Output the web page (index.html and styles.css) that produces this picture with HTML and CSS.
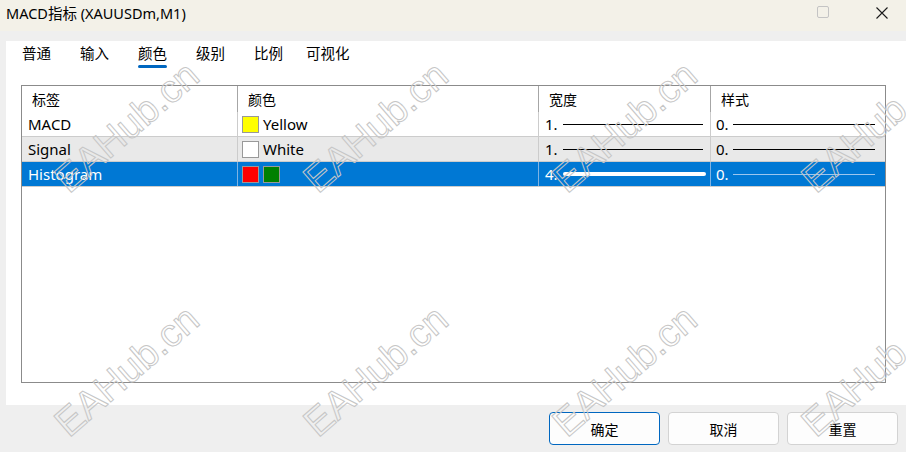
FILE: index.html
```html
<!DOCTYPE html>
<html lang="zh-CN">
<head>
    <meta charset="UTF-8">
    <title>MACD指标 (XAUUSDm,M1)</title>
    <link rel="stylesheet" href="styles.css">
</head>
<body>
    <div class="window">
        <!-- 标题栏 -->
        <div class="titlebar">
            <span class="title">MACD指标 (XAUUSDm,M1)</span>
            <span class="btn-max"></span>
            <svg class="btn-close" width="12" height="12" viewBox="0 0 12 12">
                <path d="M0.5 0.5 L11.5 11.5 M11.5 0.5 L0.5 11.5" stroke="#1a1a1a" stroke-width="1.1" fill="none"/>
            </svg>
        </div>

        <div class="panel">
            <!-- 选项卡 -->
            <ul class="tabs">
                <li>普通</li>
                <li>输入</li>
                <li class="active">颜色</li>
                <li>级别</li>
                <li class="narrow">比例</li>
                <li>可视化</li>
            </ul>

            <!-- 线条列表 -->
            <div class="list">
                <div class="row head">
                    <div class="cell c1">标签</div>
                    <div class="cell c2">颜色</div>
                    <div class="cell c3">宽度</div>
                    <div class="cell c4">样式</div>
                </div>
                <div class="row">
                    <div class="cell c1">MACD</div>
                    <div class="cell c2"><span class="swatch" style="background:#ffff00"></span>Yellow</div>
                    <div class="cell c3">1.<span class="line w1"></span></div>
                    <div class="cell c4">0.<span class="line s0"></span></div>
                </div>
                <div class="row alt">
                    <div class="cell c1">Signal</div>
                    <div class="cell c2"><span class="swatch" style="background:#ffffff"></span>White</div>
                    <div class="cell c3">1.<span class="line w1"></span></div>
                    <div class="cell c4">0.<span class="line s0"></span></div>
                </div>
                <div class="row selected">
                    <div class="cell c1">Histogram</div>
                    <div class="cell c2"><span class="swatch" style="background:#ff0000"></span><span class="swatch" style="background:#008000"></span></div>
                    <div class="cell c3">4.<span class="line w4"></span></div>
                    <div class="cell c4">0.<span class="line s0"></span></div>
                </div>
            </div>
        </div>

        <!-- 底部按钮 -->
        <div class="footer">
            <button class="btn primary">确定</button>
            <button class="btn">取消</button>
            <button class="btn">重置</button>
        </div>

        <!-- 水印 -->
        <div class="watermark">
            <span>EAHub.cn</span><span>EAHub.cn</span><span>EAHub.cn</span><span>EAHub.cn</span>
            <span>EAHub.cn</span><span>EAHub.cn</span><span>EAHub.cn</span><span>EAHub.cn</span>
        </div>
    </div>
</body>
</html>
```

FILE: styles.css
```css
*{
    margin: 0;
    padding: 0;
    box-sizing: border-box;
}
body{
    background-color: #efefef;
    font-family: "Segoe UI", "Noto Sans", "Noto Sans CJK SC", sans-serif;
    color: #000;
}
.window{
    width: 906px;
    height: 452px;
    position: relative;
    overflow: hidden;
}

/* 标题栏 */
.titlebar{
    height: 31px;
    background-color: #f3f1e8;
    display: flex;
    align-items: center;
    padding-left: 6px;
}
.title{
    font-size: 14.5px;
    flex: 1;
    margin-top: -7px;
}
.btn-max{
    width: 12px;
    height: 12px;
    border: 1px solid #c4c4c4;
    border-radius: 2px;
    margin-right: 47px;
    margin-top: -7px;
}
.btn-close{
    margin-right: 18px;
    margin-top: -6px;
}

/* 白色内容区 */
.panel{
    margin: 10px 0 0 6px;
    height: 364px;
    background-color: #fff;
    padding: 0 20px 0 15px;
}

.tabs{
    list-style: none;
    display: flex;
    padding: 1px 0 0 1px;
    height: 44px;
}
.tabs li{
    font-size: 14.5px;
    font-family: "Noto Sans CJK SC", sans-serif;
    margin-right: 29px;
    height: 24px;
    position: relative;
}
.tabs li.narrow{
    margin-right: 23px;
}
.tabs li.active::after{
    content: "";
    position: absolute;
    left: 0;
    right: 0;
    bottom: -2px;
    height: 3px;
    border-radius: 2px;
    background-color: #0067c0;
}

/* 列表 */
.list{
    border: 1px solid #8b8b8b;
    height: 298px;
    font-size: 15px;
}
.row{
    display: flex;
    height: 25px;
    border-bottom: 1px solid #cccccc;
}
.row.head{
    height: 26px;
    border-bottom: none;
}
.row.alt{
    background-color: #e9e9e9;
}
.row.selected{
    background-color: #0078d4;
    color: #fff;
}
.cell{
    display: flex;
    align-items: center;
    padding-left: 6px;
    border-right: 1px solid #cccccc;
    white-space: nowrap;
}
.head .cell{
    padding-left: 10px;
    border-right-color: #a6a6a6;
    font-family: "Noto Sans CJK SC", sans-serif;
    font-size: 14px;
    align-items: flex-end;
    padding-bottom: 3px;
}
.selected .cell{
    border-right-color: #7fb3e3;
}
.cell:last-child{
    border-right: none;
}
.c1{ width: 216px; }
.c2{ width: 301px; padding-left: 4px; }
.c3{ width: 172px; }
.c4{ flex: 1; padding-left: 5px; }

.swatch{
    width: 17px;
    height: 17px;
    border: 1px solid #999;
    margin-right: 4px;
}

/* 线宽、线型示意 */
.line{
    display: block;
    height: 1px;
    background-color: #000;
    margin-left: 5px;
}
.w1{ width: 140px; }
.w4{
    width: 143px;
    height: 4px;
    border-radius: 2px;
    background-color: #fff;
}
.s0{ width: 142px; margin-left: 4px; }
.selected .s0{ background-color: #9cc6ee; }

/* 底部按钮 */
.footer{
    display: flex;
    justify-content: flex-end;
    gap: 8px;
    padding: 7px 8px 0 0;
}
.btn{
    width: 111px;
    height: 33px;
    background-color: #fdfdfd;
    border: 1px solid #d3d3d3;
    border-radius: 4px;
    font-family: "Noto Sans CJK SC", sans-serif;
    font-size: 14px;
    color: #000;
}
.btn.primary{
    border-color: #0067c0;
}

/* 水印 */
.watermark{
    position: absolute;
    left: 2px;
    top: 5px;
    display: grid;
    grid-template-columns: repeat(4, 249px);
    grid-template-rows: repeat(2, 244px);
    place-items: center;
    pointer-events: none;
}
.watermark span{
    font-family: "Liberation Sans", sans-serif;
    font-size: 39px;
    color: transparent;
    -webkit-text-stroke: 1px #c6c6c6;
    transform: rotate(-41deg);
    white-space: nowrap;
}
```
